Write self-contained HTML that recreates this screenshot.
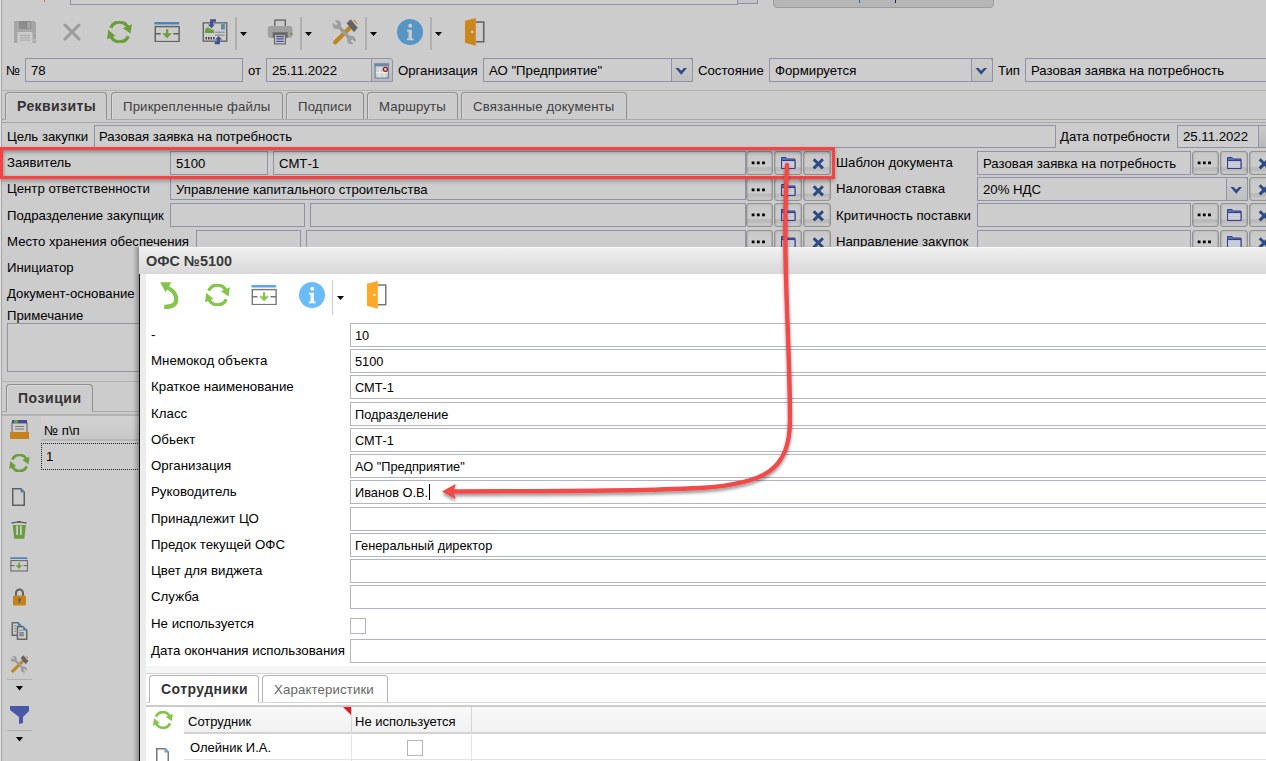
<!DOCTYPE html><html><head><meta charset="utf-8"><style>
html,body{margin:0;padding:0;width:1266px;height:761px;overflow:hidden;background:#cccccc;position:relative;font-family:"Liberation Sans",sans-serif;}
.t{position:absolute;white-space:nowrap;line-height:normal;font-family:"Liberation Sans",sans-serif;}
</style></head><body>
<div style="position:absolute;left:0px;top:0px;width:2px;height:761px;box-sizing:border-box;background:#a6a6a6;border-left:1px solid #e2e2e2"></div>
<div style="position:absolute;left:70px;top:-20px;width:668px;height:25px;box-sizing:border-box;border:1px solid #9192a6;background:#cdcdcd"></div>
<div style="position:absolute;left:737px;top:-20px;width:21px;height:24px;box-sizing:border-box;border:1px solid #9192a6;background:#c4c4c4"></div>
<div style="position:absolute;left:773px;top:-20px;width:221px;height:28px;box-sizing:border-box;border:1px solid #9d9d9d;border-radius:4px;background:#b6b6b6"></div>
<div style="position:absolute;left:859px;top:0px;width:1px;height:3px;box-sizing:border-box;background:#2a6a9a"></div>
<div style="position:absolute;left:895px;top:0px;width:1px;height:3px;box-sizing:border-box;background:#202050"></div>
<div style="position:absolute;left:44px;top:0px;width:1px;height:2px;box-sizing:border-box;background:#c08020"></div>
<svg style="position:absolute;left:14px;top:21px;filter:brightness(0.8);" width="22" height="22" viewBox="0 0 22 22"><path d="M0 0H20.5L22 1.5V22H0Z" fill="#d0d0d0"/><rect x="5" y="0" width="12" height="8" fill="#afafaf"/><rect x="13.4" y="1" width="2.6" height="6.3" fill="#d2d2d2"/><rect x="3.4" y="11" width="15.1" height="11" fill="#fefefe"/><path d="M6 14.4h10M6 16.8h10M6 19.1h10" stroke="#d2d2d2" stroke-width="1"/><rect x="19.7" y="18.3" width="1.6" height="2" fill="#fafafa"/></svg>
<svg style="position:absolute;left:63px;top:23px;filter:brightness(0.8);" width="18" height="18" viewBox="0 0 18 18"><path d="M2 2L16 16M16 2L2 16" stroke="#c0c0c0" stroke-width="3" stroke-linecap="round"/></svg>
<svg style="position:absolute;left:107px;top:21px;filter:brightness(0.8);" width="25" height="22" viewBox="0 0 25 22"><path d="M3.7 6.8A9.6 9.6 0 0 1 21.2 6.9" fill="none" stroke="#84c64a" stroke-width="3.3"/><path d="M24.9 3.3L23.5 12.4L15.9 7.2Z" fill="#84c64a"/><path d="M21.3 15.2A9.6 9.6 0 0 1 3.8 15.1" fill="none" stroke="#84c64a" stroke-width="3.3"/><path d="M1.2 8.7L0 18.3L8.4 14.8Z" fill="#84c64a"/></svg>
<svg style="position:absolute;left:154px;top:21px;filter:brightness(0.8);" width="26" height="21" viewBox="0 0 26 21"><rect x="0.3" y="0.9" width="25" height="2.5" rx="1.2" fill="#5aa8f0"/><rect x="1.3" y="5.6" width="23.8" height="15" fill="none" stroke="#787878" stroke-width="1.4"/><path d="M0.8 12.8h5.8M19.4 12.8h5.9" stroke="#787878" stroke-width="1.4"/><rect x="12" y="8.2" width="2.2" height="5" fill="#84c64a"/><path d="M8.2 12.2H17.9L13.05 17.3Z" fill="#84c64a"/></svg>
<svg style="position:absolute;left:202px;top:19px;filter:brightness(0.8);" width="26" height="27" viewBox="0 0 26 27"><rect x="1.25" y="3.85" width="23.5" height="18.3" fill="#fff" stroke="#787878" stroke-width="1.3"/><path d="M3 14V10.2Q4.8 7.6 7 8.8L9.2 10.4L12 10.8V14Z" fill="#84c64a"/><rect x="19.1" y="5.2" width="3.8" height="5.3" fill="#5aa8f0"/><rect x="20.4" y="6.9" width="1.3" height="1.9" fill="#e0a030"/><path d="M13 13.2h9.7" stroke="#a0a0a0" stroke-width="1"/><path d="M13 16.1h9.7" stroke="#b4b4b4" stroke-width="1.3"/><path d="M3.5 19.2h1.5M6 19.2h1.5M8.5 19.2h1.5M11 19.2h1.5" stroke="#555" stroke-width="2.6"/><path d="M9.5 6.5V1.5H14" fill="none" stroke="#5060b8" stroke-width="2.7"/><path d="M5.9 5.6H12.9L9.4 9.3Z" fill="#5060b8"/><path d="M16.5 19.5V24H12.7" fill="none" stroke="#5060b8" stroke-width="2.7"/><path d="M13 20.6H20.2L16.6 17Z" fill="#5060b8"/></svg>
<svg style="position:absolute;left:267px;top:19px;filter:brightness(0.8);" width="26" height="27" viewBox="3 4 26 27"><rect x="10.9" y="5.1" width="10.4" height="8" fill="#fff" stroke="#787878" stroke-width="1.3"/><path d="M3.8 13.5Q3.8 11 6.3 11H25.9Q28.4 11 28.4 13.5V20.5Q28.4 22.8 26 22.8H6Q3.8 22.8 3.8 20.5Z" fill="#c8c8c8"/><rect x="8.7" y="17.2" width="15" height="5.6" fill="#828282"/><rect x="25.9" y="17.9" width="2.7" height="1.8" fill="#84c64a"/><rect x="10.5" y="19.7" width="10.9" height="9.2" fill="#fff" stroke="#828282" stroke-width="1.2"/><path d="M12.2 21.6h7.6M12.2 23.8h7.6M12.2 26.4h7.6" stroke="#5060b8" stroke-width="1.3"/></svg>
<svg style="position:absolute;left:332px;top:19px;filter:brightness(0.8);" width="26" height="26" viewBox="0 0 26 26"><path d="M3.2 23.3L18 8.5" stroke="#f0a828" stroke-width="4.4" stroke-linecap="round"/><path d="M14.6 4.2L18.6 0.2L25.8 8.8L22 13.2Z" fill="#7d7d7d"/><path d="M21.3 1.3L24.9 5.1L25.6 4.5L22.2 0.6Z" fill="#f0a828"/><path d="M4.8 5.6L19.3 21" stroke="#c4c4c4" stroke-width="3.4"/><circle cx="4.8" cy="5.6" r="4.3" fill="#c4c4c4"/><circle cx="19.3" cy="21" r="4.3" fill="#c4c4c4"/><path d="M4.8 5.6L0.3 1.1M19.3 21L23.8 25.5" stroke="#fff" stroke-width="2.4"/></svg>
<svg style="position:absolute;left:397px;top:19px;filter:brightness(0.8);" width="26" height="26" viewBox="0 0 25.2 25.2"><circle cx="12.6" cy="12.6" r="12.6" fill="#6abcf8"/><circle cx="12.8" cy="6.6" r="1.9" fill="#fff"/><path d="M9.6 10.3h4.8v8.6h1.7v1.8h-6.5v-1.8h1.6v-6.8h-1.6z" fill="#fff"/></svg>
<svg style="position:absolute;left:465px;top:18px;filter:brightness(0.8);" width="20" height="28" viewBox="0 0 20 28"><path d="M10.8 3.95H18.75V23.65H10.8" fill="none" stroke="#787878" stroke-width="1.5"/><path d="M0 2.7L10.8 0V27.7L0 24.8Z" fill="#ffa726"/><rect x="6.1" y="12.8" width="2.4" height="2.2" fill="#fff"/></svg>
<div style="position:absolute;left:235px;top:17px;width:2px;height:33px;box-sizing:border-box;background:#b0b0b0"></div>
<div style="position:absolute;left:300px;top:17px;width:2px;height:33px;box-sizing:border-box;background:#b0b0b0"></div>
<div style="position:absolute;left:365px;top:17px;width:2px;height:33px;box-sizing:border-box;background:#b0b0b0"></div>
<div style="position:absolute;left:430px;top:17px;width:2px;height:33px;box-sizing:border-box;background:#b0b0b0"></div>
<svg style="position:absolute;left:240px;top:32px;" width="7" height="4" viewBox="0 0 7 4"><path d="M0 0h7L3.5 4z" fill="#000"/></svg>
<svg style="position:absolute;left:305px;top:32px;" width="7" height="4" viewBox="0 0 7 4"><path d="M0 0h7L3.5 4z" fill="#000"/></svg>
<svg style="position:absolute;left:370px;top:32px;" width="7" height="4" viewBox="0 0 7 4"><path d="M0 0h7L3.5 4z" fill="#000"/></svg>
<svg style="position:absolute;left:435px;top:32px;" width="7" height="4" viewBox="0 0 7 4"><path d="M0 0h7L3.5 4z" fill="#000"/></svg>
<div class="t" style="left:6px;top:63.05px;font-size:13.2px;font-weight:normal;color:#000;letter-spacing:0px;">№</div>
<div style="position:absolute;left:25px;top:58px;width:218px;height:24px;box-sizing:border-box;border:1px solid #9192a6;background:#cdcdcd"></div>
<div class="t" style="left:31px;top:63.05px;font-size:13.2px;font-weight:normal;color:#000;letter-spacing:0px;">78</div>
<div class="t" style="left:248px;top:63.05px;font-size:13.2px;font-weight:normal;color:#000;letter-spacing:0px;">от</div>
<div style="position:absolute;left:266px;top:58px;width:106px;height:24px;box-sizing:border-box;border:1px solid #9192a6;background:#cdcdcd"></div>
<div class="t" style="left:272px;top:63.05px;font-size:13.2px;font-weight:normal;color:#000;letter-spacing:0px;">25.11.2022</div>
<div style="position:absolute;left:371px;top:58px;width:22px;height:24px;box-sizing:border-box;border:1px solid #9192a6;background:linear-gradient(#cacaca,#bcbcbc);border-radius:0 3px 0 0"><svg width="21" height="22" style="position:absolute;left:-1px;top:0"><rect x="4.1" y="5.1" width="13.3" height="14" fill="#d2d2d2" stroke="#7088a8" stroke-width="1.3"/><rect x="3.5" y="4.4" width="14.5" height="3" fill="#7088a8"/><path d="M8.7 8v10.5M13.1 8v10.5M4.8 13.6h12" stroke="#ececec" stroke-width="1"/><circle cx="14.4" cy="10.3" r="2" fill="#e4e4e4" stroke="#9a1818" stroke-width="1.3"/></svg></div>
<div class="t" style="left:398px;top:63.05px;font-size:13.2px;font-weight:normal;color:#000;letter-spacing:0px;">Организация</div>
<div style="position:absolute;left:483px;top:58px;width:210px;height:24px;box-sizing:border-box;border:1px solid #9192a6;background:#cdcdcd"></div>
<div class="t" style="left:489px;top:63.05px;font-size:13.2px;font-weight:normal;color:#000;letter-spacing:0px;">АО "Предприятие"</div>
<div style="position:absolute;left:671px;top:58px;width:22px;height:24px;box-sizing:border-box;border:1px solid #9192a6;border-radius:0 3px 0 0;background:linear-gradient(#cbcbcb,#c0c0c0)"><svg width="20" height="22" style="position:absolute;left:0;top:0"><path d="M3.5 9.0H6.5L9.2 11.8L12 9.0H15L9.2 15.8Z" fill="#2c4a86"/></svg></div>
<div class="t" style="left:698px;top:63.05px;font-size:13.2px;font-weight:normal;color:#000;letter-spacing:0px;">Состояние</div>
<div style="position:absolute;left:769px;top:58px;width:224px;height:24px;box-sizing:border-box;border:1px solid #9192a6;background:#cdcdcd"></div>
<div class="t" style="left:775px;top:63.05px;font-size:13.2px;font-weight:normal;color:#000;letter-spacing:0px;">Формируется</div>
<div style="position:absolute;left:971px;top:58px;width:22px;height:24px;box-sizing:border-box;border:1px solid #9192a6;border-radius:0 3px 0 0;background:linear-gradient(#cbcbcb,#c0c0c0)"><svg width="20" height="22" style="position:absolute;left:0;top:0"><path d="M3.5 9.0H6.5L9.2 11.8L12 9.0H15L9.2 15.8Z" fill="#2c4a86"/></svg></div>
<div class="t" style="left:998px;top:63.05px;font-size:13.2px;font-weight:normal;color:#000;letter-spacing:0px;">Тип</div>
<div style="position:absolute;left:1025px;top:58px;width:260px;height:24px;box-sizing:border-box;border:1px solid #9192a6;background:#cdcdcd"></div>
<div class="t" style="left:1031px;top:63.05px;font-size:13.2px;font-weight:normal;color:#000;letter-spacing:0px;">Разовая заявка на потребность</div>
<div style="position:absolute;left:2px;top:90px;width:1264px;height:1px;box-sizing:border-box;background:#b4b4b4"></div>
<div style="position:absolute;left:5px;top:92px;width:102px;height:28px;box-sizing:border-box;border:1px solid #8e8e8e;border-bottom:none;border-radius:4px 4px 0 0;background:#cccccc;box-shadow:inset 1px 1px 0 #d8d8d8"></div>
<div class="t" style="left:17px;top:98.33px;font-size:14px;font-weight:bold;color:#333;letter-spacing:0.42px;">Реквизиты</div>
<div style="position:absolute;left:111px;top:92px;width:172px;height:28px;box-sizing:border-box;border:1px solid #8e8e8e;border-bottom:none;border-radius:4px 4px 0 0;background:#cccccc;box-shadow:inset 1px 1px 0 #d8d8d8"></div>
<div class="t" style="left:123px;top:99.05px;font-size:13.2px;font-weight:normal;color:#404040;letter-spacing:0.15px;">Прикрепленные файлы</div>
<div style="position:absolute;left:286px;top:92px;width:78px;height:28px;box-sizing:border-box;border:1px solid #8e8e8e;border-bottom:none;border-radius:4px 4px 0 0;background:#cccccc;box-shadow:inset 1px 1px 0 #d8d8d8"></div>
<div class="t" style="left:298px;top:99.05px;font-size:13.2px;font-weight:normal;color:#404040;letter-spacing:0.15px;">Подписи</div>
<div style="position:absolute;left:367px;top:92px;width:91px;height:28px;box-sizing:border-box;border:1px solid #8e8e8e;border-bottom:none;border-radius:4px 4px 0 0;background:#cccccc;box-shadow:inset 1px 1px 0 #d8d8d8"></div>
<div class="t" style="left:379px;top:99.05px;font-size:13.2px;font-weight:normal;color:#404040;letter-spacing:0.15px;">Маршруты</div>
<div style="position:absolute;left:461px;top:92px;width:166px;height:28px;box-sizing:border-box;border:1px solid #8e8e8e;border-bottom:none;border-radius:4px 4px 0 0;background:#cccccc;box-shadow:inset 1px 1px 0 #d8d8d8"></div>
<div class="t" style="left:473px;top:99.05px;font-size:13.2px;font-weight:normal;color:#404040;letter-spacing:0.15px;">Связанные документы</div>
<div style="position:absolute;left:2px;top:119px;width:1264px;height:1px;box-sizing:border-box;background:#aaaaaa"></div>
<div style="position:absolute;left:2px;top:122px;width:1264px;height:1px;box-sizing:border-box;background:#a8a8a8"></div>
<div style="position:absolute;left:6px;top:119px;width:100px;height:1px;box-sizing:border-box;background:#cccccc"></div>
<div class="t" style="left:7px;top:129.05px;font-size:13.2px;font-weight:normal;color:#000;letter-spacing:0px;">Цель закупки</div>
<div style="position:absolute;left:94px;top:125px;width:962px;height:23px;box-sizing:border-box;border:1px solid #9192a6;background:#cdcdcd"></div>
<div class="t" style="left:99px;top:129.05px;font-size:13.2px;font-weight:normal;color:#000;letter-spacing:0px;">Разовая заявка на потребность</div>
<div class="t" style="left:1060px;top:129.05px;font-size:13.2px;font-weight:normal;color:#000;letter-spacing:0px;">Дата потребности</div>
<div style="position:absolute;left:1177px;top:125px;width:82px;height:23px;box-sizing:border-box;border:1px solid #9192a6;background:#cdcdcd"></div>
<div class="t" style="left:1183px;top:129.05px;font-size:13.2px;font-weight:normal;color:#000;letter-spacing:0px;">25.11.2022</div>
<div style="position:absolute;left:1258px;top:125px;width:20px;height:23px;box-sizing:border-box;border:1px solid #9192a6;background:linear-gradient(#c9c9c9,#b9b9b9)"></div>
<div class="t" style="left:7px;top:155.05px;font-size:13.2px;font-weight:normal;color:#000;letter-spacing:0px;">Заявитель</div>
<div style="position:absolute;left:170px;top:151px;width:98px;height:24px;box-sizing:border-box;border:1px solid #9192a6;background:#cdcdcd"></div>
<div class="t" style="left:176px;top:156.05px;font-size:13.2px;font-weight:normal;color:#000;letter-spacing:0px;">5100</div>
<div style="position:absolute;left:273px;top:151px;width:473px;height:24px;box-sizing:border-box;border:1px solid #9192a6;background:#cdcdcd"></div>
<div class="t" style="left:279px;top:156.05px;font-size:13.2px;font-weight:normal;color:#000;letter-spacing:0px;">СМТ-1</div>
<div style="position:absolute;left:746px;top:151px;width:27px;height:24px;box-sizing:border-box;border:1px solid #939393;border-radius:3px;background:linear-gradient(#c6c6c6 0%,#cbcbcb 30%,#cbcbcb 68%,#b9b9b9 71%,#bdbdbd 86%,#c8c8c8 90%,#c8c8c8 100%);box-shadow:inset 1px 0 1px rgba(0,0,0,0.12),inset -1px 0 1px rgba(0,0,0,0.12)"><svg width="27" height="23" style="position:absolute;left:-1px;top:-1px"><path d="M5.7 11.8h2.8M10.9 11.8h2.8M16.1 11.8h2.8" stroke="#000" stroke-width="2.7"/></svg></div>
<div style="position:absolute;left:774px;top:151px;width:28px;height:24px;box-sizing:border-box;border:1px solid #939393;border-radius:3px;background:linear-gradient(#c6c6c6 0%,#cbcbcb 30%,#cbcbcb 68%,#b9b9b9 71%,#bdbdbd 86%,#c8c8c8 90%,#c8c8c8 100%);box-shadow:inset 1px 0 1px rgba(0,0,0,0.12),inset -1px 0 1px rgba(0,0,0,0.12)"><svg width="28" height="23" style="position:absolute;left:-1px;top:-1px"><path d="M7.5 6.5H12L13.5 8H21V17.5H7.5Z" fill="#4a7cc4" stroke="#3a3a88" stroke-width="1"/><path d="M7.5 9.5H21V17.5H7.5Z" fill="#bec4d2" stroke="#3a3a88" stroke-width="1"/><path d="M8.5 12.3h11.5M8.5 14.7h11.5" stroke="#d4dae4" stroke-width="1.1"/></svg></div>
<div style="position:absolute;left:803px;top:151px;width:28px;height:24px;box-sizing:border-box;border:1px solid #939393;border-radius:3px;background:linear-gradient(#c6c6c6 0%,#cbcbcb 30%,#cbcbcb 68%,#b9b9b9 71%,#bdbdbd 86%,#c8c8c8 90%,#c8c8c8 100%);box-shadow:inset 1px 0 1px rgba(0,0,0,0.12),inset -1px 0 1px rgba(0,0,0,0.12)"><svg width="28" height="23" style="position:absolute;left:-1px;top:-1px"><path d="M10.7 8.2L19.9 17.4M19.9 8.2L10.7 17.4" stroke="#2c4a86" stroke-width="3"/></svg></div>
<div class="t" style="left:7px;top:181.05px;font-size:13.2px;font-weight:normal;color:#000;letter-spacing:0px;">Центр ответственности</div>
<div style="position:absolute;left:170px;top:177px;width:576px;height:23px;box-sizing:border-box;border:1px solid #9192a6;background:#cdcdcd"></div>
<div class="t" style="left:176px;top:182.05px;font-size:13.2px;font-weight:normal;color:#000;letter-spacing:0px;">Управление капитального строительства</div>
<div style="position:absolute;left:746px;top:178px;width:27px;height:23px;box-sizing:border-box;border:1px solid #939393;border-radius:3px;background:linear-gradient(#c6c6c6 0%,#cbcbcb 30%,#cbcbcb 68%,#b9b9b9 71%,#bdbdbd 86%,#c8c8c8 90%,#c8c8c8 100%);box-shadow:inset 1px 0 1px rgba(0,0,0,0.12),inset -1px 0 1px rgba(0,0,0,0.12)"><svg width="27" height="23" style="position:absolute;left:-1px;top:-1px"><path d="M5.7 11.8h2.8M10.9 11.8h2.8M16.1 11.8h2.8" stroke="#000" stroke-width="2.7"/></svg></div>
<div style="position:absolute;left:774px;top:178px;width:28px;height:23px;box-sizing:border-box;border:1px solid #939393;border-radius:3px;background:linear-gradient(#c6c6c6 0%,#cbcbcb 30%,#cbcbcb 68%,#b9b9b9 71%,#bdbdbd 86%,#c8c8c8 90%,#c8c8c8 100%);box-shadow:inset 1px 0 1px rgba(0,0,0,0.12),inset -1px 0 1px rgba(0,0,0,0.12)"><svg width="28" height="23" style="position:absolute;left:-1px;top:-1px"><path d="M7.5 6.5H12L13.5 8H21V17.5H7.5Z" fill="#4a7cc4" stroke="#3a3a88" stroke-width="1"/><path d="M7.5 9.5H21V17.5H7.5Z" fill="#bec4d2" stroke="#3a3a88" stroke-width="1"/><path d="M8.5 12.3h11.5M8.5 14.7h11.5" stroke="#d4dae4" stroke-width="1.1"/></svg></div>
<div style="position:absolute;left:803px;top:178px;width:28px;height:23px;box-sizing:border-box;border:1px solid #939393;border-radius:3px;background:linear-gradient(#c6c6c6 0%,#cbcbcb 30%,#cbcbcb 68%,#b9b9b9 71%,#bdbdbd 86%,#c8c8c8 90%,#c8c8c8 100%);box-shadow:inset 1px 0 1px rgba(0,0,0,0.12),inset -1px 0 1px rgba(0,0,0,0.12)"><svg width="28" height="23" style="position:absolute;left:-1px;top:-1px"><path d="M10.7 8.2L19.9 17.4M19.9 8.2L10.7 17.4" stroke="#2c4a86" stroke-width="3"/></svg></div>
<div class="t" style="left:7px;top:208.05px;font-size:13.2px;font-weight:normal;color:#000;letter-spacing:0px;">Подразделение закупщик</div>
<div style="position:absolute;left:170px;top:203px;width:135px;height:24px;box-sizing:border-box;border:1px solid #9192a6;background:#cdcdcd"></div>
<div style="position:absolute;left:310px;top:203px;width:436px;height:24px;box-sizing:border-box;border:1px solid #9192a6;background:#cdcdcd"></div>
<div style="position:absolute;left:746px;top:203px;width:27px;height:24px;box-sizing:border-box;border:1px solid #939393;border-radius:3px;background:linear-gradient(#c6c6c6 0%,#cbcbcb 30%,#cbcbcb 68%,#b9b9b9 71%,#bdbdbd 86%,#c8c8c8 90%,#c8c8c8 100%);box-shadow:inset 1px 0 1px rgba(0,0,0,0.12),inset -1px 0 1px rgba(0,0,0,0.12)"><svg width="27" height="23" style="position:absolute;left:-1px;top:-1px"><path d="M5.7 11.8h2.8M10.9 11.8h2.8M16.1 11.8h2.8" stroke="#000" stroke-width="2.7"/></svg></div>
<div style="position:absolute;left:774px;top:203px;width:28px;height:24px;box-sizing:border-box;border:1px solid #939393;border-radius:3px;background:linear-gradient(#c6c6c6 0%,#cbcbcb 30%,#cbcbcb 68%,#b9b9b9 71%,#bdbdbd 86%,#c8c8c8 90%,#c8c8c8 100%);box-shadow:inset 1px 0 1px rgba(0,0,0,0.12),inset -1px 0 1px rgba(0,0,0,0.12)"><svg width="28" height="23" style="position:absolute;left:-1px;top:-1px"><path d="M7.5 6.5H12L13.5 8H21V17.5H7.5Z" fill="#4a7cc4" stroke="#3a3a88" stroke-width="1"/><path d="M7.5 9.5H21V17.5H7.5Z" fill="#bec4d2" stroke="#3a3a88" stroke-width="1"/><path d="M8.5 12.3h11.5M8.5 14.7h11.5" stroke="#d4dae4" stroke-width="1.1"/></svg></div>
<div style="position:absolute;left:803px;top:203px;width:28px;height:24px;box-sizing:border-box;border:1px solid #939393;border-radius:3px;background:linear-gradient(#c6c6c6 0%,#cbcbcb 30%,#cbcbcb 68%,#b9b9b9 71%,#bdbdbd 86%,#c8c8c8 90%,#c8c8c8 100%);box-shadow:inset 1px 0 1px rgba(0,0,0,0.12),inset -1px 0 1px rgba(0,0,0,0.12)"><svg width="28" height="23" style="position:absolute;left:-1px;top:-1px"><path d="M10.7 8.2L19.9 17.4M19.9 8.2L10.7 17.4" stroke="#2c4a86" stroke-width="3"/></svg></div>
<div class="t" style="left:7px;top:234.05px;font-size:13.2px;font-weight:normal;color:#000;letter-spacing:0px;">Место хранения обеспечения</div>
<div style="position:absolute;left:196px;top:230px;width:105px;height:24px;box-sizing:border-box;border:1px solid #9192a6;background:#cdcdcd"></div>
<div style="position:absolute;left:306px;top:230px;width:440px;height:24px;box-sizing:border-box;border:1px solid #9192a6;background:#cdcdcd"></div>
<div style="position:absolute;left:746px;top:230px;width:27px;height:24px;box-sizing:border-box;border:1px solid #939393;border-radius:3px;background:linear-gradient(#c6c6c6 0%,#cbcbcb 30%,#cbcbcb 68%,#b9b9b9 71%,#bdbdbd 86%,#c8c8c8 90%,#c8c8c8 100%);box-shadow:inset 1px 0 1px rgba(0,0,0,0.12),inset -1px 0 1px rgba(0,0,0,0.12)"><svg width="27" height="23" style="position:absolute;left:-1px;top:-1px"><path d="M5.7 11.8h2.8M10.9 11.8h2.8M16.1 11.8h2.8" stroke="#000" stroke-width="2.7"/></svg></div>
<div style="position:absolute;left:774px;top:230px;width:28px;height:24px;box-sizing:border-box;border:1px solid #939393;border-radius:3px;background:linear-gradient(#c6c6c6 0%,#cbcbcb 30%,#cbcbcb 68%,#b9b9b9 71%,#bdbdbd 86%,#c8c8c8 90%,#c8c8c8 100%);box-shadow:inset 1px 0 1px rgba(0,0,0,0.12),inset -1px 0 1px rgba(0,0,0,0.12)"><svg width="28" height="23" style="position:absolute;left:-1px;top:-1px"><path d="M7.5 6.5H12L13.5 8H21V17.5H7.5Z" fill="#4a7cc4" stroke="#3a3a88" stroke-width="1"/><path d="M7.5 9.5H21V17.5H7.5Z" fill="#bec4d2" stroke="#3a3a88" stroke-width="1"/><path d="M8.5 12.3h11.5M8.5 14.7h11.5" stroke="#d4dae4" stroke-width="1.1"/></svg></div>
<div style="position:absolute;left:803px;top:230px;width:28px;height:24px;box-sizing:border-box;border:1px solid #939393;border-radius:3px;background:linear-gradient(#c6c6c6 0%,#cbcbcb 30%,#cbcbcb 68%,#b9b9b9 71%,#bdbdbd 86%,#c8c8c8 90%,#c8c8c8 100%);box-shadow:inset 1px 0 1px rgba(0,0,0,0.12),inset -1px 0 1px rgba(0,0,0,0.12)"><svg width="28" height="23" style="position:absolute;left:-1px;top:-1px"><path d="M10.7 8.2L19.9 17.4M19.9 8.2L10.7 17.4" stroke="#2c4a86" stroke-width="3"/></svg></div>
<div class="t" style="left:836px;top:155.05px;font-size:13.2px;font-weight:normal;color:#000;letter-spacing:0px;">Шаблон документа</div>
<div style="position:absolute;left:977px;top:151px;width:214px;height:24px;box-sizing:border-box;border:1px solid #9192a6;background:#cdcdcd"></div>
<div class="t" style="left:983px;top:156.05px;font-size:13.2px;font-weight:normal;color:#000;letter-spacing:0px;">Разовая заявка на потребность</div>
<div style="position:absolute;left:1192px;top:151px;width:27px;height:24px;box-sizing:border-box;border:1px solid #939393;border-radius:3px;background:linear-gradient(#c6c6c6 0%,#cbcbcb 30%,#cbcbcb 68%,#b9b9b9 71%,#bdbdbd 86%,#c8c8c8 90%,#c8c8c8 100%);box-shadow:inset 1px 0 1px rgba(0,0,0,0.12),inset -1px 0 1px rgba(0,0,0,0.12)"><svg width="27" height="23" style="position:absolute;left:-1px;top:-1px"><path d="M5.7 11.8h2.8M10.9 11.8h2.8M16.1 11.8h2.8" stroke="#000" stroke-width="2.7"/></svg></div>
<div style="position:absolute;left:1220px;top:151px;width:28px;height:24px;box-sizing:border-box;border:1px solid #939393;border-radius:3px;background:linear-gradient(#c6c6c6 0%,#cbcbcb 30%,#cbcbcb 68%,#b9b9b9 71%,#bdbdbd 86%,#c8c8c8 90%,#c8c8c8 100%);box-shadow:inset 1px 0 1px rgba(0,0,0,0.12),inset -1px 0 1px rgba(0,0,0,0.12)"><svg width="28" height="23" style="position:absolute;left:-1px;top:-1px"><path d="M7.5 6.5H12L13.5 8H21V17.5H7.5Z" fill="#4a7cc4" stroke="#3a3a88" stroke-width="1"/><path d="M7.5 9.5H21V17.5H7.5Z" fill="#bec4d2" stroke="#3a3a88" stroke-width="1"/><path d="M8.5 12.3h11.5M8.5 14.7h11.5" stroke="#d4dae4" stroke-width="1.1"/></svg></div>
<div style="position:absolute;left:1249px;top:151px;width:28px;height:24px;box-sizing:border-box;border:1px solid #939393;border-radius:3px;background:linear-gradient(#c6c6c6 0%,#cbcbcb 30%,#cbcbcb 68%,#b9b9b9 71%,#bdbdbd 86%,#c8c8c8 90%,#c8c8c8 100%);box-shadow:inset 1px 0 1px rgba(0,0,0,0.12),inset -1px 0 1px rgba(0,0,0,0.12)"><svg width="28" height="23" style="position:absolute;left:-1px;top:-1px"><path d="M10.7 8.2L19.9 17.4M19.9 8.2L10.7 17.4" stroke="#2c4a86" stroke-width="3"/></svg></div>
<div class="t" style="left:836px;top:181.05px;font-size:13.2px;font-weight:normal;color:#000;letter-spacing:0px;">Налоговая ставка</div>
<div style="position:absolute;left:977px;top:177px;width:271px;height:24px;box-sizing:border-box;border:1px solid #9192a6;background:#cdcdcd"></div>
<div class="t" style="left:983px;top:182.05px;font-size:13.2px;font-weight:normal;color:#000;letter-spacing:0px;">20% НДС</div>
<div style="position:absolute;left:1226px;top:177px;width:22px;height:24px;box-sizing:border-box;border:1px solid #9192a6;border-radius:0 3px 0 0;background:linear-gradient(#cbcbcb,#c0c0c0)"><svg width="20" height="22" style="position:absolute;left:0;top:0"><path d="M3.5 9.0H6.5L9.2 11.8L12 9.0H15L9.2 15.8Z" fill="#2c4a86"/></svg></div>
<div style="position:absolute;left:1249px;top:177px;width:27px;height:24px;box-sizing:border-box;border:1px solid #939393;border-radius:3px;background:linear-gradient(#c6c6c6 0%,#cbcbcb 30%,#cbcbcb 68%,#b9b9b9 71%,#bdbdbd 86%,#c8c8c8 90%,#c8c8c8 100%);box-shadow:inset 1px 0 1px rgba(0,0,0,0.12),inset -1px 0 1px rgba(0,0,0,0.12)"><svg width="28" height="23" style="position:absolute;left:-1px;top:-1px"><path d="M10.7 8.2L19.9 17.4M19.9 8.2L10.7 17.4" stroke="#2c4a86" stroke-width="3"/></svg></div>
<div class="t" style="left:836px;top:208.05px;font-size:13.2px;font-weight:normal;color:#000;letter-spacing:0px;">Критичность поставки</div>
<div style="position:absolute;left:977px;top:203px;width:214px;height:24px;box-sizing:border-box;border:1px solid #9192a6;background:#cdcdcd"></div>
<div style="position:absolute;left:1192px;top:203px;width:27px;height:24px;box-sizing:border-box;border:1px solid #939393;border-radius:3px;background:linear-gradient(#c6c6c6 0%,#cbcbcb 30%,#cbcbcb 68%,#b9b9b9 71%,#bdbdbd 86%,#c8c8c8 90%,#c8c8c8 100%);box-shadow:inset 1px 0 1px rgba(0,0,0,0.12),inset -1px 0 1px rgba(0,0,0,0.12)"><svg width="27" height="23" style="position:absolute;left:-1px;top:-1px"><path d="M5.7 11.8h2.8M10.9 11.8h2.8M16.1 11.8h2.8" stroke="#000" stroke-width="2.7"/></svg></div>
<div style="position:absolute;left:1220px;top:203px;width:28px;height:24px;box-sizing:border-box;border:1px solid #939393;border-radius:3px;background:linear-gradient(#c6c6c6 0%,#cbcbcb 30%,#cbcbcb 68%,#b9b9b9 71%,#bdbdbd 86%,#c8c8c8 90%,#c8c8c8 100%);box-shadow:inset 1px 0 1px rgba(0,0,0,0.12),inset -1px 0 1px rgba(0,0,0,0.12)"><svg width="28" height="23" style="position:absolute;left:-1px;top:-1px"><path d="M7.5 6.5H12L13.5 8H21V17.5H7.5Z" fill="#4a7cc4" stroke="#3a3a88" stroke-width="1"/><path d="M7.5 9.5H21V17.5H7.5Z" fill="#bec4d2" stroke="#3a3a88" stroke-width="1"/><path d="M8.5 12.3h11.5M8.5 14.7h11.5" stroke="#d4dae4" stroke-width="1.1"/></svg></div>
<div style="position:absolute;left:1249px;top:203px;width:28px;height:24px;box-sizing:border-box;border:1px solid #939393;border-radius:3px;background:linear-gradient(#c6c6c6 0%,#cbcbcb 30%,#cbcbcb 68%,#b9b9b9 71%,#bdbdbd 86%,#c8c8c8 90%,#c8c8c8 100%);box-shadow:inset 1px 0 1px rgba(0,0,0,0.12),inset -1px 0 1px rgba(0,0,0,0.12)"><svg width="28" height="23" style="position:absolute;left:-1px;top:-1px"><path d="M10.7 8.2L19.9 17.4M19.9 8.2L10.7 17.4" stroke="#2c4a86" stroke-width="3"/></svg></div>
<div class="t" style="left:836px;top:234.05px;font-size:13.2px;font-weight:normal;color:#000;letter-spacing:0px;">Направление закупок</div>
<div style="position:absolute;left:977px;top:230px;width:214px;height:24px;box-sizing:border-box;border:1px solid #9192a6;background:#cdcdcd"></div>
<div style="position:absolute;left:1192px;top:230px;width:27px;height:24px;box-sizing:border-box;border:1px solid #939393;border-radius:3px;background:linear-gradient(#c6c6c6 0%,#cbcbcb 30%,#cbcbcb 68%,#b9b9b9 71%,#bdbdbd 86%,#c8c8c8 90%,#c8c8c8 100%);box-shadow:inset 1px 0 1px rgba(0,0,0,0.12),inset -1px 0 1px rgba(0,0,0,0.12)"><svg width="27" height="23" style="position:absolute;left:-1px;top:-1px"><path d="M5.7 11.8h2.8M10.9 11.8h2.8M16.1 11.8h2.8" stroke="#000" stroke-width="2.7"/></svg></div>
<div style="position:absolute;left:1220px;top:230px;width:28px;height:24px;box-sizing:border-box;border:1px solid #939393;border-radius:3px;background:linear-gradient(#c6c6c6 0%,#cbcbcb 30%,#cbcbcb 68%,#b9b9b9 71%,#bdbdbd 86%,#c8c8c8 90%,#c8c8c8 100%);box-shadow:inset 1px 0 1px rgba(0,0,0,0.12),inset -1px 0 1px rgba(0,0,0,0.12)"><svg width="28" height="23" style="position:absolute;left:-1px;top:-1px"><path d="M7.5 6.5H12L13.5 8H21V17.5H7.5Z" fill="#4a7cc4" stroke="#3a3a88" stroke-width="1"/><path d="M7.5 9.5H21V17.5H7.5Z" fill="#bec4d2" stroke="#3a3a88" stroke-width="1"/><path d="M8.5 12.3h11.5M8.5 14.7h11.5" stroke="#d4dae4" stroke-width="1.1"/></svg></div>
<div style="position:absolute;left:1249px;top:230px;width:28px;height:24px;box-sizing:border-box;border:1px solid #939393;border-radius:3px;background:linear-gradient(#c6c6c6 0%,#cbcbcb 30%,#cbcbcb 68%,#b9b9b9 71%,#bdbdbd 86%,#c8c8c8 90%,#c8c8c8 100%);box-shadow:inset 1px 0 1px rgba(0,0,0,0.12),inset -1px 0 1px rgba(0,0,0,0.12)"><svg width="28" height="23" style="position:absolute;left:-1px;top:-1px"><path d="M10.7 8.2L19.9 17.4M19.9 8.2L10.7 17.4" stroke="#2c4a86" stroke-width="3"/></svg></div>
<div class="t" style="left:7px;top:260.05px;font-size:13.2px;font-weight:normal;color:#000;letter-spacing:0px;">Инициатор</div>
<div class="t" style="left:7px;top:286.05px;font-size:13.2px;font-weight:normal;color:#000;letter-spacing:0px;">Документ-основание</div>
<div class="t" style="left:7px;top:308.05px;font-size:13.2px;font-weight:normal;color:#000;letter-spacing:0px;">Примечание</div>
<div style="position:absolute;left:7px;top:323px;width:140px;height:49px;box-sizing:border-box;border:1px solid #9192a6;background:#cdcdcd"></div>
<div style="position:absolute;left:2px;top:381px;width:1264px;height:1px;box-sizing:border-box;background:#b4b4b4"></div>
<div style="position:absolute;left:6px;top:384px;width:87px;height:28px;box-sizing:border-box;border:1px solid #8e8e8e;border-bottom:none;border-radius:4px 4px 0 0;background:#cccccc;box-shadow:inset 1px 1px 0 #d8d8d8"></div>
<div class="t" style="left:18px;top:390.33px;font-size:14px;font-weight:bold;color:#333;letter-spacing:0.55px;">Позиции</div>
<div style="position:absolute;left:2px;top:411px;width:1264px;height:1px;box-sizing:border-box;background:#aaaaaa"></div>
<div style="position:absolute;left:7px;top:411px;width:85px;height:1px;box-sizing:border-box;background:#cccccc"></div>
<div style="position:absolute;left:2px;top:414px;width:1264px;height:2px;box-sizing:border-box;background:#b2b2b2"></div>
<div style="position:absolute;left:41px;top:416px;width:1225px;height:25px;box-sizing:border-box;background:linear-gradient(#d2d2d2,#c8c8c8);border-bottom:2px solid #b6b6b6"></div>
<div class="t" style="left:44px;top:423.05px;font-size:13.2px;font-weight:normal;color:#000;letter-spacing:0px;">№ п\п</div>
<div style="position:absolute;left:41px;top:443px;width:1225px;height:27px;box-sizing:border-box;border:1px dotted #222"></div>
<div class="t" style="left:46px;top:449.05px;font-size:13.2px;font-weight:normal;color:#000;letter-spacing:0px;">1</div>
<svg style="position:absolute;left:10px;top:420px;filter:brightness(0.8);" width="19" height="19" viewBox="0 0 19 19"><rect x="2" y="3" width="15" height="10" fill="#fff" stroke="#787878" stroke-width="1"/><rect x="2" y="0" width="15" height="3" fill="#5060b8"/><rect x="4" y="0" width="4" height="3" fill="#84c64a"/><path d="M5 6.5h9M5 9h9" stroke="#999" stroke-width="1"/><rect x="0" y="12" width="19" height="7" fill="#f8a424"/></svg>
<svg style="position:absolute;left:9px;top:454px;filter:brightness(0.8);" width="21" height="18" viewBox="0 0 25 22"><path d="M3.7 6.8A9.6 9.6 0 0 1 21.2 6.9" fill="none" stroke="#84c64a" stroke-width="3.3"/><path d="M24.9 3.3L23.5 12.4L15.9 7.2Z" fill="#84c64a"/><path d="M21.3 15.2A9.6 9.6 0 0 1 3.8 15.1" fill="none" stroke="#84c64a" stroke-width="3.3"/><path d="M1.2 8.7L0 18.3L8.4 14.8Z" fill="#84c64a"/></svg>
<svg style="position:absolute;left:12px;top:488px;filter:brightness(0.8);" width="13" height="18" viewBox="0 0 13 18"><path d="M0.75 0.75H9L12.25 4V17.25H0.75Z" fill="#fff" stroke="#787878" stroke-width="1.5"/><path d="M8.5 0L13 4.5H8.5Z" fill="#5aa8f0"/></svg>
<svg style="position:absolute;left:11px;top:520px;filter:brightness(0.8);" width="16" height="19" viewBox="0 0 16 19"><path d="M0.5 3Q8 1.2 15.5 3" fill="none" stroke="#787878" stroke-width="1.4"/><rect x="6" y="1" width="4" height="1.6" fill="#787878"/><path d="M1.7 5H14.9L13.4 18.8H3.2Z" fill="#84c64a"/><path d="M6.1 5.5V15M9.9 5.5V15" stroke="#fff" stroke-width="1.7"/></svg>
<svg style="position:absolute;left:10px;top:556px;filter:brightness(0.8);" width="18" height="16" viewBox="0 0 26 21"><rect x="0.3" y="0.9" width="25" height="2.5" rx="1.2" fill="#5aa8f0"/><rect x="1.3" y="5.6" width="23.8" height="15" fill="none" stroke="#787878" stroke-width="1.4"/><path d="M0.8 12.8h5.8M19.4 12.8h5.9" stroke="#787878" stroke-width="1.4"/><rect x="12" y="8.2" width="2.2" height="5" fill="#84c64a"/><path d="M8.2 12.2H17.9L13.05 17.3Z" fill="#84c64a"/></svg>
<svg style="position:absolute;left:13px;top:588px;filter:brightness(0.8);" width="13" height="18" viewBox="0 0 13 18"><path d="M3 8V5A3.5 3.5 0 0 1 10 5V8" fill="none" stroke="#787878" stroke-width="2"/><rect x="0" y="7.5" width="13" height="10" rx="1.5" fill="#f8a424"/><circle cx="6.5" cy="11.5" r="1.6" fill="#787878"/><rect x="5.8" y="12" width="1.4" height="3" fill="#787878"/></svg>
<svg style="position:absolute;left:6px;top:616px;filter:brightness(0.8);" width="26" height="28" viewBox="0 0 26 28"><path d="M6.25 6.75H12L16 10.75V19.25H6.25Z" fill="#fff" stroke="#828282" stroke-width="1.5"/><path d="M11.8 6L16.6 10.8H11.8Z" fill="#5aa8f0"/><path d="M8.3 9.8h2M8.3 12.5h2M8.3 15.2h2" stroke="#a8a8a8" stroke-width="1.2"/><path d="M11.45 10.65H17L20.75 14.4V23.25H11.45Z" fill="#fff" stroke="#828282" stroke-width="1.5"/><path d="M16.8 9.9L21.5 14.6H16.8Z" fill="#5aa8f0"/><path d="M13.3 14.3h2.6M13.3 16.6h4.6M13.3 18.1h4.6M13.3 19.6h4.6" stroke="#a0a0a0" stroke-width="1.1"/></svg>
<svg style="position:absolute;left:10px;top:655px;filter:brightness(0.8);" width="19" height="18" viewBox="0 0 26 26"><path d="M3.2 23.3L18 8.5" stroke="#f0a828" stroke-width="4.4" stroke-linecap="round"/><path d="M14.6 4.2L18.6 0.2L25.8 8.8L22 13.2Z" fill="#7d7d7d"/><path d="M21.3 1.3L24.9 5.1L25.6 4.5L22.2 0.6Z" fill="#f0a828"/><path d="M4.8 5.6L19.3 21" stroke="#c4c4c4" stroke-width="3.4"/><circle cx="4.8" cy="5.6" r="4.3" fill="#c4c4c4"/><circle cx="19.3" cy="21" r="4.3" fill="#c4c4c4"/><path d="M4.8 5.6L0.3 1.1M19.3 21L23.8 25.5" stroke="#fff" stroke-width="2.4"/></svg>
<div style="position:absolute;left:7px;top:679px;width:25px;height:1px;box-sizing:border-box;background:#b0b0b0"></div>
<svg style="position:absolute;left:16px;top:686px;" width="7" height="5" viewBox="0 0 7 5"><path d="M0 0h7L3.5 4.5z" fill="#000"/></svg>
<svg style="position:absolute;left:10px;top:706px;filter:brightness(0.8);" width="19" height="18" viewBox="0 0 19 18"><path d="M0 0H19V5L13 11V17L9 18V11L0 4Z" fill="#5a6ed0"/></svg>
<div style="position:absolute;left:7px;top:730px;width:25px;height:1px;box-sizing:border-box;background:#b0b0b0"></div>
<svg style="position:absolute;left:16px;top:737px;" width="7" height="5" viewBox="0 0 7 5"><path d="M0 0h7L3.5 4.5z" fill="#000"/></svg>
<div style="position:absolute;left:0px;top:147px;width:835px;height:32px;box-sizing:border-box;border:3px solid #f54242;box-shadow:0 2px 4px 0 rgba(0,0,0,0.3), inset 0 3px 4px -1px rgba(0,0,0,0.32), inset 1px 0 3px 0 rgba(0,0,0,0.15)"></div>
<div style="position:absolute;left:132px;top:247px;width:7px;height:514px;box-sizing:border-box;background:linear-gradient(90deg,rgba(0,0,0,0),rgba(0,0,0,0.08) 40%,rgba(0,0,0,0.3))"></div>
<div style="position:absolute;left:139px;top:247px;width:1147px;height:534px;box-sizing:border-box;background:#fff"></div>
<div style="position:absolute;left:139px;top:247px;width:1147px;height:27px;box-sizing:border-box;background:linear-gradient(#efefef,#d9d9d9);border-top:1px solid #fafafa"></div>
<div class="t" style="left:146px;top:252.67px;font-size:14.4px;font-weight:bold;color:#3a3a3a;letter-spacing:0px;">ОФС №5100</div>
<div style="position:absolute;left:139px;top:274px;width:1px;height:487px;box-sizing:border-box;background:#111"></div>
<div style="position:absolute;left:140px;top:274px;width:6px;height:487px;box-sizing:border-box;background:#ececec"></div>
<svg style="position:absolute;left:156px;top:278px;" width="28" height="34" viewBox="0 0 28 34"><path d="M4.2 4.2H15.4L9.6 14.3Z" fill="#84c64a"/><path d="M11.5 9.5C18 13 20.5 17 20.2 22C20 26.5 16 29 8.2 28.8" fill="none" stroke="#84c64a" stroke-width="4.2"/></svg>
<svg style="position:absolute;left:205px;top:284px;" width="25" height="22" viewBox="0 0 25 22"><path d="M3.7 6.8A9.6 9.6 0 0 1 21.2 6.9" fill="none" stroke="#84c64a" stroke-width="3.3"/><path d="M24.9 3.3L23.5 12.4L15.9 7.2Z" fill="#84c64a"/><path d="M21.3 15.2A9.6 9.6 0 0 1 3.8 15.1" fill="none" stroke="#84c64a" stroke-width="3.3"/><path d="M1.2 8.7L0 18.3L8.4 14.8Z" fill="#84c64a"/></svg>
<svg style="position:absolute;left:251px;top:284px;" width="26" height="21" viewBox="0 0 26 21"><rect x="0.3" y="0.9" width="25" height="2.5" rx="1.2" fill="#5aa8f0"/><rect x="1.3" y="5.6" width="23.8" height="15" fill="none" stroke="#787878" stroke-width="1.4"/><path d="M0.8 12.8h5.8M19.4 12.8h5.9" stroke="#787878" stroke-width="1.4"/><rect x="12" y="8.2" width="2.2" height="5" fill="#84c64a"/><path d="M8.2 12.2H17.9L13.05 17.3Z" fill="#84c64a"/></svg>
<svg style="position:absolute;left:299px;top:282px;" width="26" height="26" viewBox="0 0 25.2 25.2"><circle cx="12.6" cy="12.6" r="12.6" fill="#6abcf8"/><circle cx="12.8" cy="6.6" r="1.9" fill="#fff"/><path d="M9.6 10.3h4.8v8.6h1.7v1.8h-6.5v-1.8h1.6v-6.8h-1.6z" fill="#fff"/></svg>
<div style="position:absolute;left:332px;top:280px;width:1px;height:35px;box-sizing:border-box;background:#c8c8c8"></div>
<svg style="position:absolute;left:337px;top:296px;" width="7" height="4" viewBox="0 0 7 4"><path d="M0 0h7L3.5 4z" fill="#000"/></svg>
<svg style="position:absolute;left:367px;top:281px;" width="20" height="28" viewBox="0 0 20 28"><path d="M10.8 3.95H18.75V23.65H10.8" fill="none" stroke="#787878" stroke-width="1.5"/><path d="M0 2.7L10.8 0V27.7L0 24.8Z" fill="#ffa726"/><rect x="6.1" y="12.8" width="2.4" height="2.2" fill="#fff"/></svg>
<div class="t" style="left:151px;top:326.96px;font-size:13.3px;font-weight:normal;color:#000;letter-spacing:0px;">-</div>
<div style="position:absolute;left:350px;top:323px;width:940px;height:24px;box-sizing:border-box;border:1px solid #b3b4c8;background:#fff"></div>
<div class="t" style="left:355px;top:327.92px;font-size:12.8px;font-weight:normal;color:#000;letter-spacing:0px;">10</div>
<div class="t" style="left:151px;top:352.96px;font-size:13.3px;font-weight:normal;color:#000;letter-spacing:0px;">Мнемокод объекта</div>
<div style="position:absolute;left:350px;top:349px;width:940px;height:24px;box-sizing:border-box;border:1px solid #b3b4c8;background:#fff"></div>
<div class="t" style="left:355px;top:353.92px;font-size:12.8px;font-weight:normal;color:#000;letter-spacing:0px;">5100</div>
<div class="t" style="left:151px;top:378.96px;font-size:13.3px;font-weight:normal;color:#000;letter-spacing:0px;">Краткое наименование</div>
<div style="position:absolute;left:350px;top:375px;width:940px;height:24px;box-sizing:border-box;border:1px solid #b3b4c8;background:#fff"></div>
<div class="t" style="left:355px;top:379.92px;font-size:12.8px;font-weight:normal;color:#000;letter-spacing:0px;">СМТ-1</div>
<div class="t" style="left:151px;top:405.96px;font-size:13.3px;font-weight:normal;color:#000;letter-spacing:0px;">Класс</div>
<div style="position:absolute;left:350px;top:402px;width:940px;height:24px;box-sizing:border-box;border:1px solid #b3b4c8;background:#fff"></div>
<div class="t" style="left:355px;top:406.92px;font-size:12.8px;font-weight:normal;color:#000;letter-spacing:0px;">Подразделение</div>
<div class="t" style="left:151px;top:431.96px;font-size:13.3px;font-weight:normal;color:#000;letter-spacing:0px;">Обьект</div>
<div style="position:absolute;left:350px;top:428px;width:940px;height:24px;box-sizing:border-box;border:1px solid #b3b4c8;background:#fff"></div>
<div class="t" style="left:355px;top:432.92px;font-size:12.8px;font-weight:normal;color:#000;letter-spacing:0px;">СМТ-1</div>
<div class="t" style="left:151px;top:457.96px;font-size:13.3px;font-weight:normal;color:#000;letter-spacing:0px;">Организация</div>
<div style="position:absolute;left:350px;top:454px;width:940px;height:24px;box-sizing:border-box;border:1px solid #b3b4c8;background:#fff"></div>
<div class="t" style="left:355px;top:458.92px;font-size:12.8px;font-weight:normal;color:#000;letter-spacing:0px;">АО "Предприятие"</div>
<div class="t" style="left:151px;top:483.96px;font-size:13.3px;font-weight:normal;color:#000;letter-spacing:0px;">Руководитель</div>
<div style="position:absolute;left:350px;top:480px;width:940px;height:24px;box-sizing:border-box;border:1px solid #b3b4c8;background:#fff"></div>
<div class="t" style="left:355px;top:484.92px;font-size:12.8px;font-weight:normal;color:#000;letter-spacing:0px;">Иванов О.В.</div>
<div class="t" style="left:151px;top:510.96px;font-size:13.3px;font-weight:normal;color:#000;letter-spacing:0px;">Принадлежит ЦО</div>
<div style="position:absolute;left:350px;top:507px;width:940px;height:24px;box-sizing:border-box;border:1px solid #b3b4c8;background:#fff"></div>
<div class="t" style="left:151px;top:536.96px;font-size:13.3px;font-weight:normal;color:#000;letter-spacing:0px;">Предок текущей ОФС</div>
<div style="position:absolute;left:350px;top:533px;width:940px;height:24px;box-sizing:border-box;border:1px solid #b3b4c8;background:#fff"></div>
<div class="t" style="left:355px;top:537.92px;font-size:12.8px;font-weight:normal;color:#000;letter-spacing:0px;">Генеральный директор</div>
<div class="t" style="left:151px;top:562.96px;font-size:13.3px;font-weight:normal;color:#000;letter-spacing:0px;">Цвет для виджета</div>
<div style="position:absolute;left:350px;top:559px;width:940px;height:24px;box-sizing:border-box;border:1px solid #b3b4c8;background:#fff"></div>
<div class="t" style="left:151px;top:588.96px;font-size:13.3px;font-weight:normal;color:#000;letter-spacing:0px;">Служба</div>
<div style="position:absolute;left:350px;top:585px;width:940px;height:24px;box-sizing:border-box;border:1px solid #b3b4c8;background:#fff"></div>
<div class="t" style="left:151px;top:615.96px;font-size:13.3px;font-weight:normal;color:#000;letter-spacing:0px;">Не используется</div>
<div style="position:absolute;left:350px;top:618px;width:16px;height:16px;box-sizing:border-box;border:1px solid #b3b4c8;background:#fff"></div>
<div class="t" style="left:151px;top:642.96px;font-size:13.3px;font-weight:normal;color:#000;letter-spacing:0px;">Дата окончания использования</div>
<div style="position:absolute;left:350px;top:639px;width:940px;height:24px;box-sizing:border-box;border:1px solid #b3b4c8;background:#fff"></div>
<div style="position:absolute;left:146px;top:666px;width:1130px;height:7px;box-sizing:border-box;background:#f6f6f6"></div>
<div style="position:absolute;left:146px;top:673px;width:1130px;height:1px;box-sizing:border-box;background:#d2d2d2"></div>
<div style="position:absolute;left:149px;top:675px;width:110px;height:28px;box-sizing:border-box;border:1px solid #b4b4b4;border-bottom:none;border-radius:4px 4px 0 0;background:#fff;box-shadow:none"></div>
<div class="t" style="left:161px;top:681.33px;font-size:14px;font-weight:bold;color:#333;letter-spacing:0.45px;">Сотрудники</div>
<div style="position:absolute;left:262px;top:675px;width:126px;height:28px;box-sizing:border-box;border:1px solid #b4b4b4;border-bottom:none;border-radius:4px 4px 0 0;background:#fff;box-shadow:none"></div>
<div class="t" style="left:274px;top:682.05px;font-size:13.2px;font-weight:normal;color:#666;letter-spacing:0.15px;">Характеристики</div>
<div style="position:absolute;left:146px;top:702px;width:1130px;height:1px;box-sizing:border-box;background:#d4d4d4"></div>
<div style="position:absolute;left:150px;top:702px;width:108px;height:1px;box-sizing:border-box;background:#fff"></div>
<div style="position:absolute;left:146px;top:705px;width:1130px;height:2px;box-sizing:border-box;background:#cbcbcb"></div>
<div style="position:absolute;left:184px;top:707px;width:1100px;height:27px;box-sizing:border-box;background:linear-gradient(#f8f8f8,#f2f2f2);border-bottom:2px solid #d2d2d2"></div>
<div style="position:absolute;left:351px;top:707px;width:1px;height:26px;box-sizing:border-box;background:#d6d6d6"></div>
<div style="position:absolute;left:471px;top:707px;width:1px;height:26px;box-sizing:border-box;background:#d6d6d6"></div>
<svg style="position:absolute;left:343px;top:707px;" width="8" height="8" viewBox="0 0 8 8"><path d="M0 0H8V8Z" fill="#e8141c"/></svg>
<div class="t" style="left:188px;top:714.24px;font-size:13px;font-weight:normal;color:#000;letter-spacing:0px;">Сотрудник</div>
<div class="t" style="left:355px;top:714.24px;font-size:13px;font-weight:normal;color:#000;letter-spacing:0px;">Не используется</div>
<svg style="position:absolute;left:153px;top:711px;" width="20" height="18" viewBox="0 0 25 22"><path d="M3.7 6.8A9.6 9.6 0 0 1 21.2 6.9" fill="none" stroke="#84c64a" stroke-width="3.3"/><path d="M24.9 3.3L23.5 12.4L15.9 7.2Z" fill="#84c64a"/><path d="M21.3 15.2A9.6 9.6 0 0 1 3.8 15.1" fill="none" stroke="#84c64a" stroke-width="3.3"/><path d="M1.2 8.7L0 18.3L8.4 14.8Z" fill="#84c64a"/></svg>
<div class="t" style="left:190px;top:740.24px;font-size:13px;font-weight:normal;color:#000;letter-spacing:0px;">Олейник И.А.</div>
<div style="position:absolute;left:351px;top:735px;width:1px;height:26px;box-sizing:border-box;background:#e4e4e4"></div>
<div style="position:absolute;left:471px;top:735px;width:1px;height:26px;box-sizing:border-box;background:#e4e4e4"></div>
<div style="position:absolute;left:184px;top:759px;width:1100px;height:1px;box-sizing:border-box;background:#e4e4e4"></div>
<div style="position:absolute;left:407px;top:740px;width:16px;height:16px;box-sizing:border-box;border:1px solid #b3b4c8;background:#fff"></div>
<svg style="position:absolute;left:156px;top:748px;" width="13" height="18" viewBox="0 0 13 18"><path d="M0.75 0.75H9L12.25 4V17.25H0.75Z" fill="#fff" stroke="#787878" stroke-width="1.5"/><path d="M8.5 0L13 4.5H8.5Z" fill="#5aa8f0"/></svg>
<svg style="position:absolute;left:0px;top:0px;" width="1266" height="761" viewBox="0 0 1266 761"><defs><filter id="sh" x="-5%" y="-5%" width="110%" height="110%"><feDropShadow dx="0" dy="2.5" stdDeviation="1.8" flood-color="#000" flood-opacity="0.4"/></filter></defs><g filter="url(#sh)"><path d="M787 165C782 260 790 340 790 420C790 470 765 484 700 488C620 492 520 491 452 491.5" fill="none" stroke="#f24848" stroke-width="4.4" stroke-linecap="round"/><path d="M443 491.5L455 485L452.5 491.5L455 498Z" fill="#f24848" stroke="#f24848" stroke-width="1.2" stroke-linejoin="round"/></g></svg>
<div style="position:absolute;left:429px;top:484px;width:1px;height:16px;box-sizing:border-box;background:#000"></div>
</body></html>
